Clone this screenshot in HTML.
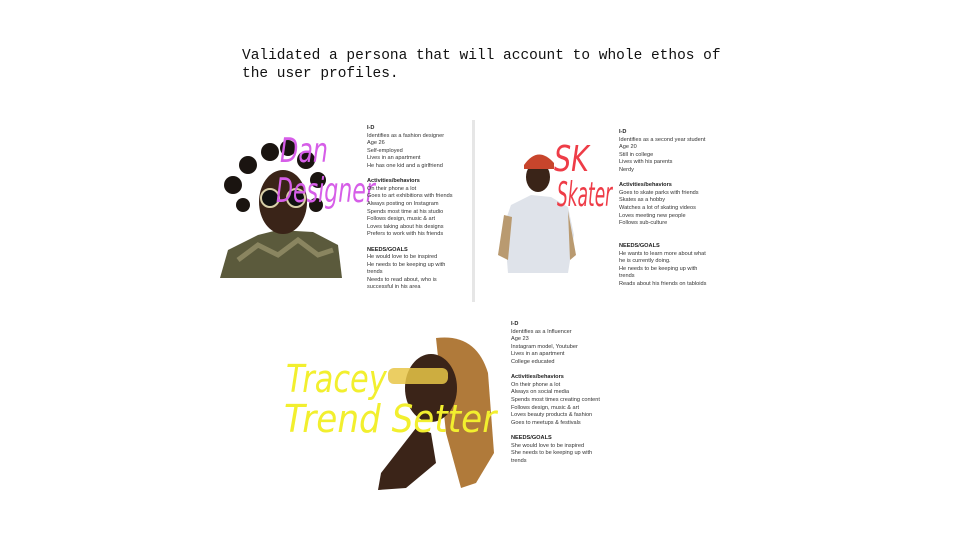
<!DOCTYPE html>
<html><head><meta charset="utf-8"><style>
body{margin:0;width:960px;height:540px;background:#fff;position:relative;overflow:hidden;font-family:"Liberation Sans",sans-serif}
.t{position:absolute;left:242px;top:47px;font-family:"Liberation Mono",monospace;font-size:14.5px;line-height:18px;color:#111}
.b{position:absolute;font-size:5.6px;line-height:7.6px;color:#333;white-space:nowrap}
.b b{font-weight:bold;color:#222}
.g{height:7.6px}
.s{position:absolute;font-family:"DejaVu Sans",cursive;font-style:italic;line-height:1;transform-origin:0 0;white-space:nowrap}
</style></head><body>
<div class="t">Validated a persona that will account to whole ethos of<br>the user profiles.</div>
<div style="position:absolute;left:472px;top:120px;width:3px;height:182px;background:#e6e6e6"></div>

<svg style="position:absolute;left:218px;top:140px" width="126" height="140">
<path d="M2 138 L10 110 L40 95 L60 90 L95 92 L120 105 L124 138Z" fill="#5b5a3c"/>
<path d="M20 120 L40 105 L60 115 L80 100 L100 115 L115 110" stroke="#8a8560" stroke-width="5" fill="none"/>
<ellipse cx="65" cy="62" rx="24" ry="32" fill="#3a2418"/>
<circle cx="30" cy="25" r="9" fill="#1a1410"/><circle cx="15" cy="45" r="9" fill="#1a1410"/><circle cx="52" cy="12" r="9" fill="#1a1410"/><circle cx="70" cy="8" r="8" fill="#1a1410"/><circle cx="88" cy="20" r="9" fill="#1a1410"/><circle cx="100" cy="40" r="8" fill="#1a1410"/><circle cx="25" cy="65" r="7" fill="#1a1410"/><circle cx="98" cy="65" r="7" fill="#1a1410"/>
<circle cx="52" cy="58" r="9" fill="#111" stroke="#d8cfa8" stroke-width="2"/><circle cx="78" cy="58" r="9" fill="#111" stroke="#d8cfa8" stroke-width="2"/>
</svg>
<div class="s" style="left:280px;top:134px;font-size:34px;color:#d65ee8;transform:scaleX(.7)">Dan</div>
<div class="s" style="left:276px;top:174px;font-size:34px;color:#d65ee8;transform:scaleX(.65)">Designer</div>
<div class="b" style="left:367px;top:125px"><b>I-D</b><br>Identifies as a fashion designer<br>Age 26<br>Self-employed<br>Lives in an apartment<br>He has one kid and a girlfriend<div class="g"></div><b>Activities/behaviors</b><br>On their phone a lot<br>Goes to art exhibitions with friends<br>Always posting on Instagram<br>Spends most time at his studio<br>Follows design, music &amp; art<br>Loves taking about his designs<br>Prefers to work with his friends<div class="g"></div><b>NEEDS/GOALS</b><br>He would love to be inspired<br>He needs to be keeping up with<br>trends<br>Needs to read about, who is<br>successful in his area</div>

<svg style="position:absolute;left:496px;top:145px" width="84" height="130">
<path d="M12 128 L8 80 L15 60 L35 50 L55 52 L72 62 L78 90 L72 128Z" fill="#dfe3ea"/>
<path d="M8 70 L2 110 L12 115 L16 72Z" fill="#b99a70"/><path d="M72 66 L80 110 L74 115Z" fill="#b99a70"/>
<ellipse cx="42" cy="32" rx="12" ry="15" fill="#3a2418"/>
<path d="M28 20 Q42 0 58 18 L58 24 L28 24Z" fill="#c8452c"/>
</svg>
<div class="s" style="left:554px;top:142px;font-size:36px;color:#ee3c47;transform:scaleX(.75)">SK</div>
<div class="s" style="left:557px;top:178px;font-size:34px;color:#ee3c47;transform:scaleX(.5)">Skater</div>
<div class="b" style="left:619px;top:129px"><b>I-D</b><br>Identifies as a second year student<br>Age 20<br>Still in college<br>Lives with his parents<br>Nerdy<div class="g"></div><b>Activities/behaviors</b><br>Goes to skate parks with friends<br>Skates as a hobby<br>Watches a lot of skating videos<br>Loves meeting new people<br>Follows sub-culture<div class="g"></div><div class="g"></div><b>NEEDS/GOALS</b><br>He wants to learn more about what<br>he is currently doing.<br>He needs to be keeping up with<br>trends<br>Reads about his friends on tabloids</div>

<svg style="position:absolute;left:376px;top:333px" width="120" height="157">
<path d="M60 5 Q100 0 112 40 L118 120 L100 150 L85 155 L70 100 Z" fill="#b07a3a"/>
<ellipse cx="55" cy="55" rx="26" ry="34" fill="#3b2418"/>
<path d="M40 95 L55 100 L60 130 L30 155 L2 157 L5 140 Z" fill="#3b2418"/>
<rect x="12" y="35" width="60" height="16" rx="6" fill="#e7c548" opacity=".85"/>
</svg>
<div class="s" style="left:286px;top:360px;font-size:38px;color:#f2ef2e;transform:scaleX(.8)">Tracey</div>
<div class="s" style="left:284px;top:400px;font-size:38px;color:#f2ef2e;transform:scaleX(.9)">Trend Setter</div>
<div class="b" style="left:511px;top:321px"><b>I-D</b><br>Identifies as a Influencer<br>Age 23<br>Instagram model, Youtuber<br>Lives in an apartment<br>College educated<div class="g"></div><b>Activities/behaviors</b><br>On their phone a lot<br>Always on social media<br>Spends most times creating content<br>Follows design, music &amp; art<br>Loves beauty products &amp; fashion<br>Goes to meetups &amp; festivals<div class="g"></div><b>NEEDS/GOALS</b><br>She would love to be inspired<br>She needs to be keeping up with<br>trends</div>
</body></html>
